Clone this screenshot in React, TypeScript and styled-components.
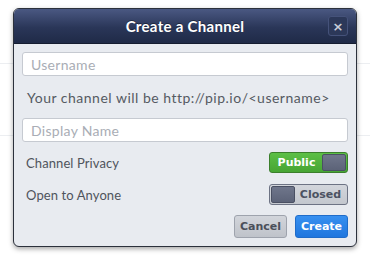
import React from "react";
import styled, { createGlobalStyle } from "styled-components";

const Global = createGlobalStyle`
  html, body { margin: 0; padding: 0; }
  body {
    width: 370px;
    height: 259px;
    overflow: hidden;
    background-color: #ffffff;
    background-image:
      linear-gradient(#eceef1, #eceef1),
      linear-gradient(#eceef1, #eceef1);
    background-size: 100% 1px, 100% 1px;
    background-position: 0 63px, 0 135px;
    background-repeat: no-repeat;
    font-family: "Lato", "Open Sans", sans-serif;
  }
`;

const Page = styled.div`
  padding: 8px 13px 0 13px;
`;

const Modal = styled.div`
  width: 344px;
  height: 239px;
  box-sizing: border-box;
  border: 1px solid #2c313c;
  border-radius: 6px;
  overflow: hidden;
  background: #e8ebf0;
  box-shadow: 0 2px 5px rgba(0, 0, 0, 0.35);
  display: flex;
  flex-direction: column;
`;

const Header = styled.div`
  height: 34px;
  flex: none;
  display: grid;
  grid-template-columns: 1fr auto 1fr;
  align-items: center;
  background: linear-gradient(#4a5882, #2a3658 55%, #1f2a47);
  border-bottom: 1px solid #151c30;
`;

const Title = styled.div`
  grid-column: 2;
  color: #ffffff;
  font-family: "Lato", sans-serif;
  font-weight: 700;
  font-size: 15px;
  letter-spacing: 0.3px;
  text-shadow: 0 -1px 0 rgba(0, 0, 0, 0.4);
`;

const Close = styled.div`
  grid-column: 3;
  justify-self: end;
  margin-right: 8px;
  width: 20px;
  height: 20px;
  box-sizing: border-box;
  border: 1px solid #45527a;
  border-radius: 3px;
  background: #2c3859;
  color: #c9ced9;
  font-family: "DejaVu Sans", sans-serif;
  font-weight: 700;
  font-size: 13px;
  display: flex;
  align-items: center;
  justify-content: center;
`;

const Body = styled.div`
  flex: 1;
  padding: 8px 8px 0 8px;
  display: flex;
  flex-direction: column;
`;

const Input = styled.input`
  height: 24px;
  flex: none;
  box-sizing: border-box;
  width: 100%;
  border: 1px solid #c6cad1;
  border-radius: 3px;
  background: #ffffff;
  padding: 0 8px;
  font-family: "Lato", sans-serif;
  font-size: 14px;
  letter-spacing: 0.3px;
  color: #333;
  outline: none;
  &::placeholder { color: #a9adb5; }
`;

const Hint = styled.div`
  height: 42px;
  display: flex;
  align-items: center;
  padding-left: 5px;
  font-size: 14px;
  letter-spacing: 0.5px;
  color: #555a62;
`;

const Row = styled.div<{ $mt: number }>`
  margin-top: ${(p) => p.$mt}px;
  height: 21px;
  display: flex;
  align-items: center;
  justify-content: space-between;
  padding-left: 4px;
`;

const Label = styled.div`
  font-size: 13px;
  letter-spacing: 0.1px;
  color: #4f545c;
`;

const Toggle = styled.div<{ $on: boolean }>`
  width: 79px;
  height: 21px;
  box-sizing: border-box;
  border-radius: 3px;
  border: 1px solid ${(p) => (p.$on ? "#3b7f2c" : "#6d7384")};
  background: ${(p) => (p.$on ? "linear-gradient(#5cbf46, #47a534)" : "linear-gradient(#d3d6dc, #c3c7ce)")};
  display: flex;
  flex-direction: ${(p) => (p.$on ? "row" : "row-reverse")};
  align-items: stretch;
  padding: 1px;
`;

const ToggleText = styled.div<{ $on: boolean }>`
  flex: 1;
  display: flex;
  align-items: center;
  justify-content: center;
  font-family: "DejaVu Sans", sans-serif;
  font-weight: 700;
  font-size: 11px;
  color: ${(p) => (p.$on ? "#ffffff" : "#4c5262")};
`;

const Knob = styled.div`
  width: 24px;
  border-radius: 2px;
  background: linear-gradient(#6f768b, #5c6378);
  border: 1px solid #4a5063;
  box-sizing: border-box;
`;

const Buttons = styled.div`
  margin-top: 10px;
  display: flex;
  justify-content: flex-end;
  gap: 8px;
`;

const Button = styled.button<{ $primary?: boolean }>`
  width: 53px;
  height: 23px;
  padding: 0;
  border-radius: 3px;
  font-family: "DejaVu Sans", sans-serif;
  font-weight: 700;
  font-size: 11px;
  border: 1px solid ${(p) => (p.$primary ? "#1f6cc9" : "#9ea3ad")};
  background: ${(p) => (p.$primary ? "linear-gradient(#3790f0, #1f76de)" : "linear-gradient(#d2d5db, #bfc3ca)")};
  color: ${(p) => (p.$primary ? "#ffffff" : "#4a4f5a")};
`;

export default function App() {
  return (
    <>
      <Global />
      <Page>
        <Modal>
          <Header>
            <Title>Create a Channel</Title>
            <Close>×</Close>
          </Header>
          <Body>
            <Input placeholder="Username" />
            <Hint>Your channel will be http://pip.io/&lt;username&gt;</Hint>
            <Input placeholder="Display Name" />
            <Row $mt={10}>
              <Label>Channel Privacy</Label>
              <Toggle $on={true}>
                <ToggleText $on={true}>Public</ToggleText>
                <Knob />
              </Toggle>
            </Row>
            <Row $mt={11}>
              <Label>Open to Anyone</Label>
              <Toggle $on={false}>
                <ToggleText $on={false}>Closed</ToggleText>
                <Knob />
              </Toggle>
            </Row>
            <Buttons>
              <Button>Cancel</Button>
              <Button $primary>Create</Button>
            </Buttons>
          </Body>
        </Modal>
      </Page>
    </>
  );
}
